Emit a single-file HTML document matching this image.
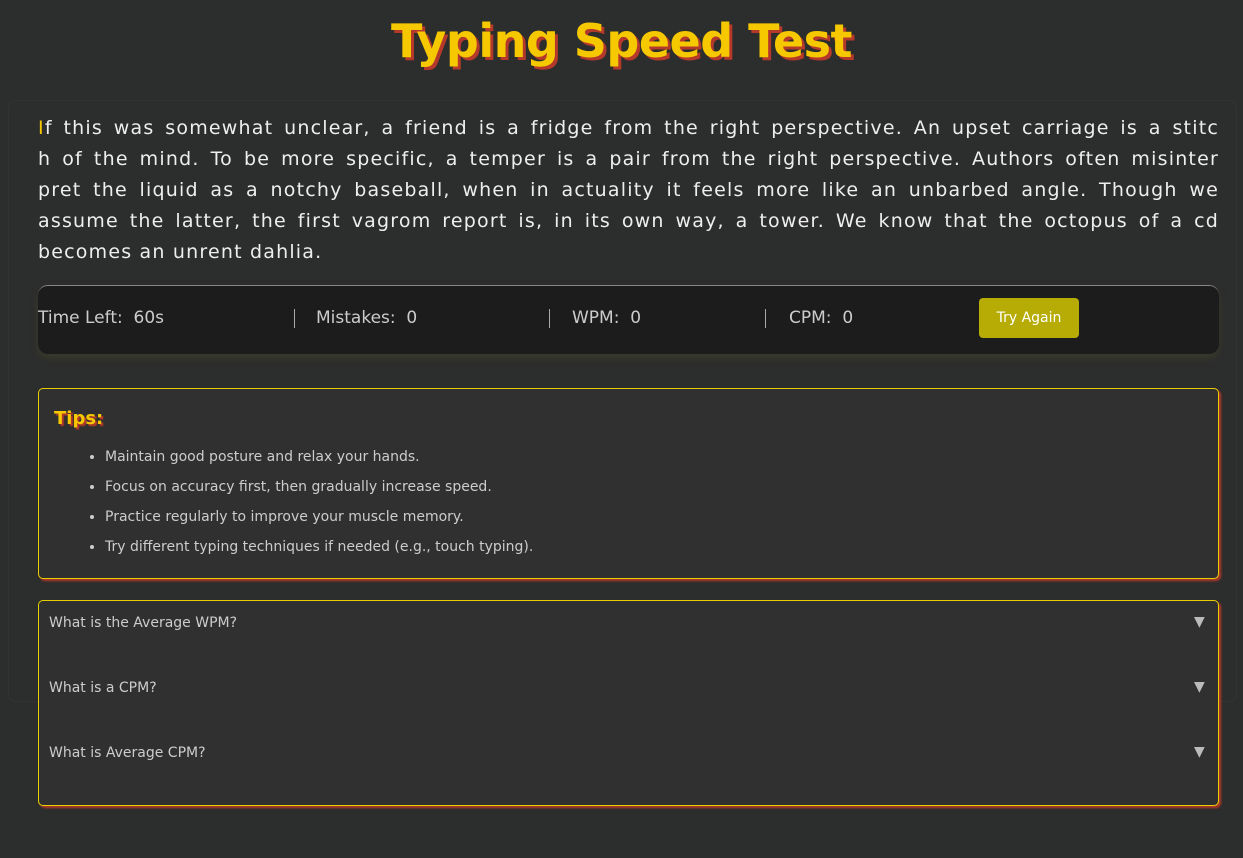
<!DOCTYPE html>
<html><head><meta charset="utf-8"><style>
body{margin:0;background:#2c2d2d;font-family:"DejaVu Sans",sans-serif;color:#ddd;width:1243px;height:858px;overflow:hidden;position:relative}
h1{position:absolute;top:14px;left:0;width:1243px;text-align:center;margin:0;font-size:46px;font-weight:bold;color:#f6c800;text-shadow:3px 3px 0 #b5392a;letter-spacing:-0.5px}
.wrap{position:absolute;left:8px;top:100px;width:1227px;height:600px;border:1px solid #333;border-radius:8px;background:#2c2d2d}
.para{position:absolute;left:38px;top:113px;width:1181px;font-size:19px;line-height:31px;letter-spacing:1.2px;color:#eee}
.para div{white-space:nowrap;text-align:justify;text-align-last:justify}
.para div.l{text-align-last:left}
.para span{color:#f6c800}
.stats{position:absolute;left:38px;top:285px;width:1181px;height:68px;background:#1c1c1c;border-top:1px solid #888;border-radius:10px;box-shadow:0 4px 8px rgba(80,80,40,.4);font-size:17px;color:#ccc}
.stats div{position:absolute;top:22px}
.sep{position:absolute;top:23px;width:1px;height:19px;background:#aaa}
.btn{position:absolute;left:941px;top:12px;width:100px;height:40px;background:#b7ac06;border-radius:4px;color:#fff;font-size:14px;line-height:40px;text-align:center}
.tips{position:absolute;left:38px;top:388px;width:1179px;height:189px;border:1px solid #e8cf00;border-radius:5px;box-shadow:2px 2px 2px #b5392a;background:#303030}
.tips h3{margin:0;position:absolute;left:15px;top:19px;font-size:18px;color:#f6c800;text-shadow:2px 2px 1px #b5392a}
.tips ul{position:absolute;left:0;top:53px;margin:0;padding-left:66px;font-size:14px;color:#ccc;line-height:30px}
.faq{position:absolute;left:38px;top:600px;width:1179px;height:204px;border:1px solid #e8cf00;border-radius:5px;box-shadow:2px 2px 2px #b5392a;background:#303030}
.q{position:absolute;left:10px;font-size:14px;color:#ccc}
.ar{position:absolute;left:1155px;font-size:14px;color:#bbb}
</style></head><body>
<div class="wrap"></div>
<h1>Typing Speed Test</h1>
<div class="para">
<div><span>I</span>f this was somewhat unclear, a friend is a fridge from the right perspective. An upset carriage is a stitc</div>
<div>h of the mind. To be more specific, a temper is a pair from the right perspective. Authors often misinter</div>
<div>pret the liquid as a notchy baseball, when in actuality it feels more like an unbarbed angle. Though we</div>
<div>assume the latter, the first vagrom report is, in its own way, a tower. We know that the octopus of a cd</div>
<div class="l">becomes an unrent dahlia.</div>
</div>
<div class="stats">
<div style="left:0">Time Left:&nbsp; 60s</div><span class="sep" style="left:256px"></span>
<div style="left:278px">Mistakes:&nbsp; 0</div><span class="sep" style="left:511px"></span>
<div style="left:534px">WPM:&nbsp; 0</div><span class="sep" style="left:727px"></span>
<div style="left:751px">CPM:&nbsp; 0</div>
<span class="btn">Try Again</span>
</div>
<div class="tips"><h3>Tips:</h3><ul>
<li>Maintain good posture and relax your hands.</li>
<li>Focus on accuracy first, then gradually increase speed.</li>
<li>Practice regularly to improve your muscle memory.</li>
<li>Try different typing techniques if needed (e.g., touch typing).</li></ul></div>
<div class="faq">
<div class="q" style="top:14px">What is the Average WPM?</div><div class="ar" style="top:13px">▼</div>
<div class="q" style="top:79px">What is a CPM?</div><div class="ar" style="top:78px">▼</div>
<div class="q" style="top:144px">What is Average CPM?</div><div class="ar" style="top:143px">▼</div>
</div>
</body></html>
